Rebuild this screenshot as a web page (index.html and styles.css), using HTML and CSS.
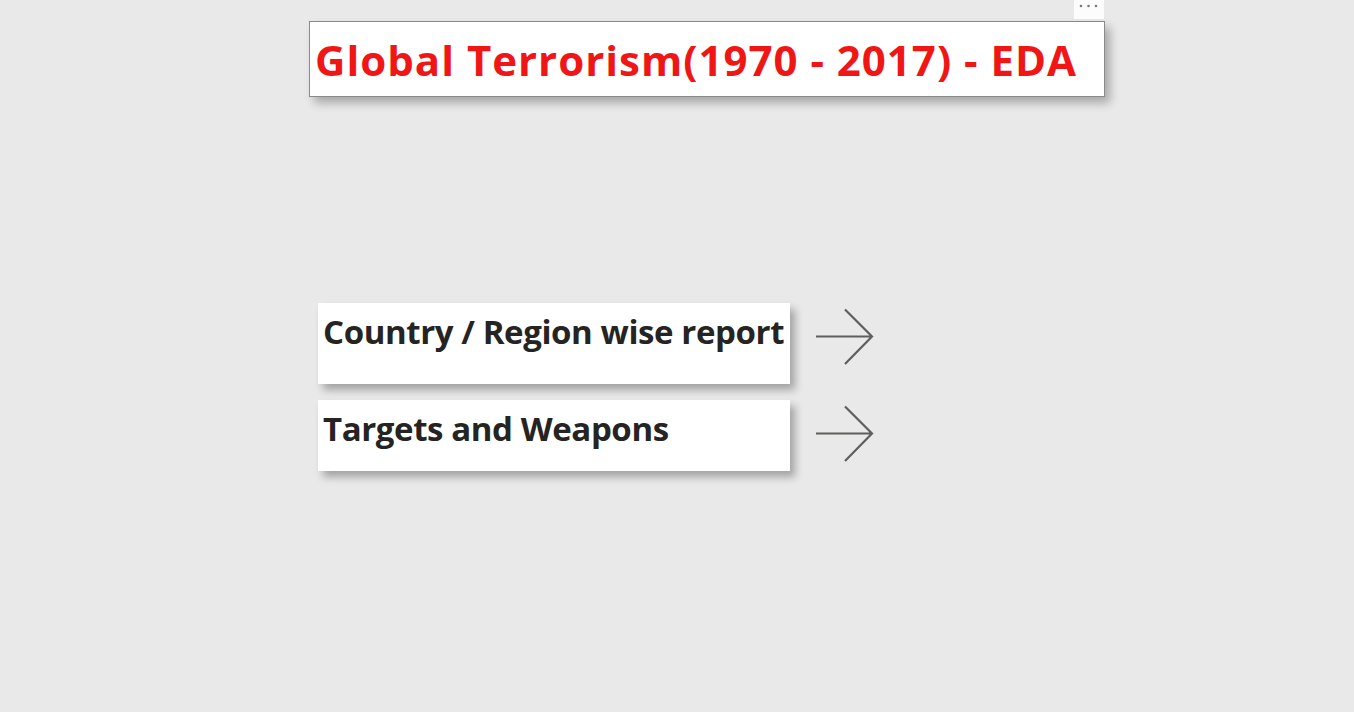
FILE: index.html
```html
<!DOCTYPE html>
<html>
<head>
<meta charset="utf-8">
<link rel="stylesheet" href="styles.css">
</head>
<body>
<div class="page">
  <div class="title-wrap">
    <div class="more"><svg width="30" height="19" viewBox="0 0 30 19"><circle cx="7" cy="6" r="1.3" fill="#7a7a7a"/><circle cx="14.5" cy="6" r="1.3" fill="#7a7a7a"/><circle cx="22" cy="6" r="1.3" fill="#7a7a7a"/></svg></div>
    <div class="title-box">
      <h1 class="title">Global Terrorism(1970 - 2017) - EDA</h1>
    </div>
  </div>
  <div class="nav">
    <div class="nav-row">
      <div class="card card-tall"><span class="card-text">Country / Region wise report</span></div>
      <svg class="arrow" width="60" height="60" viewBox="0 0 60 60"><path d="M0 29.5 H56 M29 2.5 L56 29.5 L29 57" fill="none" stroke="#5f5e5c" stroke-width="2.2"/></svg>
    </div>
    <div class="nav-row">
      <div class="card card-short"><span class="card-text">Targets and Weapons</span></div>
      <svg class="arrow" width="60" height="60" viewBox="0 0 60 60"><path d="M0 29.5 H56 M29 2.5 L56 29.5 L29 57" fill="none" stroke="#5f5e5c" stroke-width="2.2"/></svg>
    </div>
  </div>
</div>
</body>
</html>
```
FILE: styles.css
```css
html, body {
  margin: 0;
  padding: 0;
}
body {
  background: #e9e9e9;
  width: 1354px;
  height: 712px;
  overflow: hidden;
  font-family: "Open Sans", "Noto Sans", sans-serif;
}
.page {
  display: flex;
  flex-direction: column;
  padding-left: 309px;
  padding-top: 21px;
}
.title-wrap {
  position: relative;
  width: 796px;
}
.more {
  position: absolute;
  right: 1px;
  top: -21px;
  width: 30px;
  height: 19px;
  background: #fcfcfc;
}
.more svg {
  display: block;
}
.title-box {
  box-sizing: border-box;
  width: 796px;
  height: 76px;
  background: #fff;
  border: 1px solid #8a8a8a;
  box-shadow: 5px 6px 9px rgba(0,0,0,0.28);
  display: flex;
  align-items: center;
  padding-left: 5px;
  padding-top: 1px;
}
.title {
  margin: 0;
  color: #f01616;
  font-size: 42px;
  font-weight: 700;
  letter-spacing: 1px;
  white-space: nowrap;
}
.nav {
  display: flex;
  flex-direction: column;
  gap: 16px;
  margin-top: 206px;
  padding-left: 9px;
}
.nav-row {
  display: flex;
  align-items: flex-start;
  gap: 26px;
}
.card {
  box-sizing: border-box;
  width: 472px;
  background: #fff;
  box-shadow: 5px 6px 8px rgba(0,0,0,0.3);
  padding: 6px 0 0 5px;
}
.card-tall { height: 81px; }
.card-short { height: 71px; }
.card-text {
  color: #252423;
  font-size: 33px;
  font-weight: 700;
  letter-spacing: -0.4px;
  white-space: nowrap;
}
.arrow {
  display: block;
  margin-top: 4px;
}
```
